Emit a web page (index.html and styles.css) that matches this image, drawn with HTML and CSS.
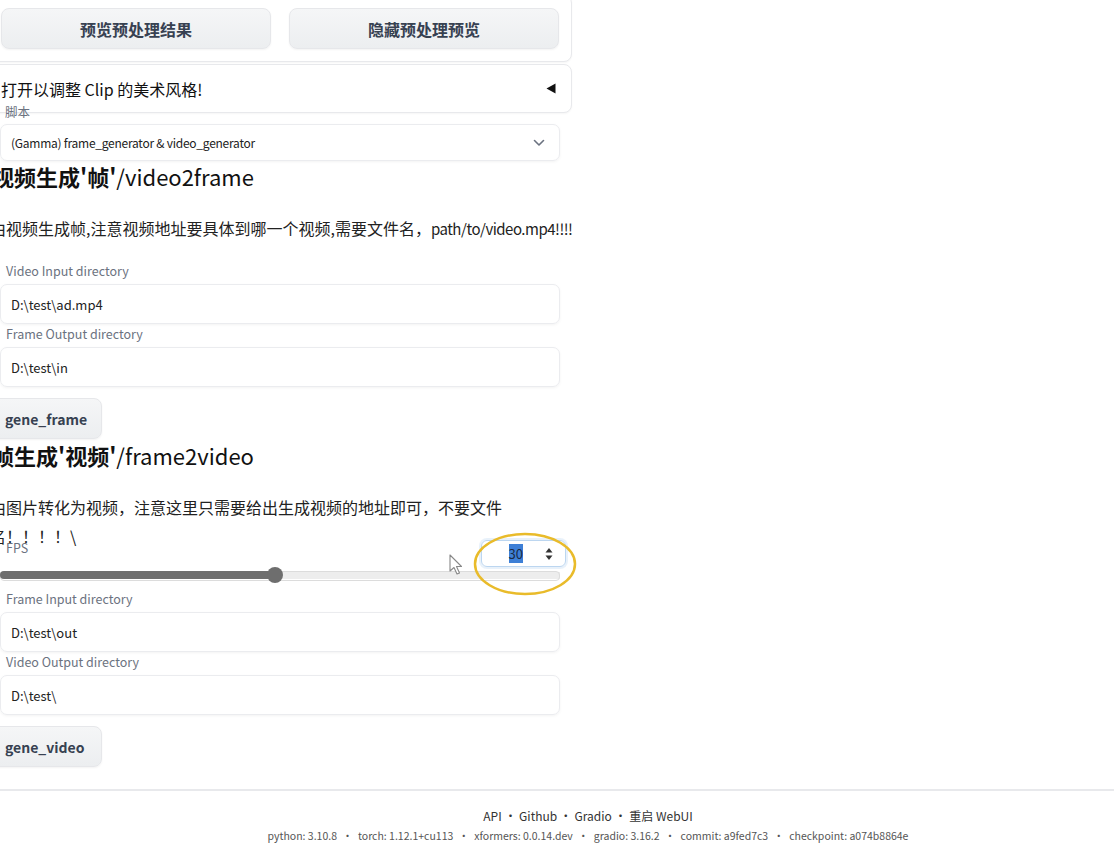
FILE: index.html
```html
<!DOCTYPE html>
<html lang="zh">
<head>
<meta charset="utf-8">
<title>video generator</title>
<link rel="stylesheet" href="styles.css">
</head>
<body>
<div class="page">
  <div class="col">
    <div class="panel btnrow">
      <button class="btn big">预览预处理结果</button>
      <button class="btn big">隐藏预处理预览</button>
    </div>
    <div class="panel accordion">
      <span>打开以调整 Clip 的美术风格!</span>
      <svg class="tri" width="10" height="11" viewBox="0 0 10 11"><polygon points="9.5,0.5 9.5,10.5 0.5,5.5" fill="#111"/></svg>
    </div>
    <div class="field dd">
      <div class="lbl">脚本</div>
      <div class="box select">
        <span class="sel-text">(Gamma) frame_generator &amp; video_generator</span>
        <svg class="chev" width="12" height="8" viewBox="0 0 12 8"><polyline points="1.5,1.5 6,6 10.5,1.5" fill="none" stroke="#6b7280" stroke-width="1.6" stroke-linecap="round" stroke-linejoin="round"/></svg>
      </div>
    </div>
    <h2 class="md-h h1"><b>视频生成'帧'</b>/video2frame</h2>
    <p class="md-p p1">由视频生成帧,注意视频地址要具体到哪一个视频,需要文件名，<span class="latin">path/to/video.mp4!!!!</span></p>
    <div class="field f1">
      <div class="lbl">Video Input directory</div>
      <div class="box">D:\test\ad.mp4</div>
    </div>
    <div class="field f2">
      <div class="lbl">Frame Output directory</div>
      <div class="box">D:\test\in</div>
    </div>
    <button class="btn small b1">gene_frame</button>
    <h2 class="md-h h2"><b>帧生成'视频'</b>/frame2video</h2>
    <p class="md-p p2">由图片转化为视频，注意这里只需要给出生成视频的地址即可，不要文件名！！！！\</p>
    <div class="slider">
      <div class="slider-head">
        <div class="lbl">FPS</div>
        <div class="num"><span class="sel">30</span><span class="spin">
          <svg width="8" height="14" viewBox="0 0 8 14"><polygon points="4,1 7.5,5.5 0.5,5.5" fill="#333"/><polygon points="4,13 7.5,8.5 0.5,8.5" fill="#333"/></svg>
        </span></div>
      </div>
      <div class="track"><div class="fill" style="width:275px"></div><div class="thumb"></div></div>
    </div>
    <div class="field f3">
      <div class="lbl">Frame Input directory</div>
      <div class="box">D:\test\out</div>
    </div>
    <div class="field f2">
      <div class="lbl">Video Output directory</div>
      <div class="box">D:\test\</div>
    </div>
    <button class="btn small b2">gene_video</button>
  </div>
  <div class="rule"></div>
  <footer class="foot">
    <div class="links">API&nbsp;•&nbsp;Github&nbsp;•&nbsp;Gradio&nbsp;•&nbsp;重启 WebUI</div>
    <div class="versions">python: 3.10.8&#x2000;•&#x2000;torch: 1.12.1+cu113&#x2000;•&#x2000;xformers: 0.0.14.dev&#x2000;•&#x2000;gradio: 3.16.2&#x2000;•&#x2000;commit: a9fed7c3&#x2000;•&#x2000;checkpoint: a074b8864e</div>
  </footer>
  <svg class="ring" width="110" height="70" viewBox="0 0 110 70"><ellipse cx="55" cy="35" rx="50" ry="30" fill="none" stroke="#e9bb2a" stroke-width="2.5"/></svg>
  <svg class="cursor" width="16" height="22" viewBox="0 0 16 22"><path d="M1 1 L1 17 L5 13.5 L8 20 L10.5 19 L7.5 12.5 L12.5 12.5 Z" fill="#fff" stroke="#888" stroke-width="1.1" stroke-linejoin="round"/></svg>
</div>
</body>
</html>
```
FILE: styles.css
```css
* { box-sizing: border-box; }
html, body { margin: 0; padding: 0; background: #fff; }
body {
  font-family: "Noto Sans CJK SC", "Noto Sans", sans-serif;
  color: #1f2937;
  overflow: hidden;
}
.page { position: relative; width: 1114px; height: 863px; overflow: hidden; }
.col {
  width: 584px;
  margin-left: -12px;
  margin-top: -5px;
  display: flex;
  flex-direction: column;
}
.panel {
  border: 1px solid #e8e9ec;
  border-radius: 8px;
  background: #fff;
  box-shadow: 0 1px 2px rgba(0,0,0,0.04);
}
.btnrow {
  display: flex;
  gap: 18px;
  padding: 12px;
}
.btn {
  font-family: "Noto Sans CJK SC", "Noto Sans", sans-serif;
  border: 1px solid #e6e7ea;
  border-radius: 8px;
  background: linear-gradient(to bottom, #f5f6f7, #eceef0);
  color: #374151;
  font-weight: 700;
  cursor: pointer;
  box-shadow: 0 1px 2px rgba(0,0,0,0.05);
}
.btn.big { flex: 1; height: 41px; font-size: 16px; }
.accordion {
  margin-top: 2px;
  height: 49px;
  display: flex;
  align-items: center;
  justify-content: space-between;
  padding: 0 15px 0 12px;
  font-size: 16px;
  color: #111;
}
.tri { display: block; }
.field { display: flex; flex-direction: column; padding: 0 12px; }
.lbl {
  font-size: 12.5px;
  line-height: 14px;
  color: #6b7280;
  padding-left: 6px;
}
.box {
  height: 40px;
  border: 1px solid #ebecef;
  border-radius: 7px;
  box-shadow: 0 1px 3px rgba(0,0,0,0.05);
  display: flex;
  align-items: center;
  padding: 0 10px;
  font-size: 13px;
  color: #222;
  margin-top: 6px;
  width: 560px;
}
.dd { margin-top: -8px; }
.dd .lbl { padding-left: 5px; }
.select { height: 37px; margin-top: 5px; justify-content: space-between; padding-right: 14px; }
.sel-text { font-size: 12px; letter-spacing: -0.25px; }
.md-h {
  margin: 0;
  font-size: 22px;
  line-height: 26px;
  font-weight: 400;
  color: #111;
  padding-left: 4px;
}
.md-h b { font-weight: 700; }
.h1 { margin-top: 2px; }
.h2 { margin-top: 3px; }
.md-p {
  margin: 25px 0 0 0;
  font-size: 16px;
  line-height: 29px;
  color: #222;
  padding-left: 2px;
}
.p1 { white-space: nowrap; }
.latin { font-size: 15px; letter-spacing: -0.5px; }
.f1 { margin-top: 21px; }
.f2 { margin-top: 3px; }
.f3 { margin-top: 9px; }
.btn.small {
  align-self: flex-start;
  height: 41px;
  width: 114px;
  font-size: 14px;
  text-align: left;
  padding: 0 0 0 16px;
  border-radius: 0 8px 8px 0;
}
.b1 { margin-top: 11px; }
.b2 { margin-top: 11px; }
.slider { margin-top: -11px; padding: 0 12px; }
.slider-head {
  display: flex;
  justify-content: space-between;
  align-items: flex-start;
  height: 27px;
}
.slider-head .lbl { margin-top: 1px; }
.num {
  width: 85px;
  height: 27px;
  margin-right: -6px;
  border: 1px solid #bcd6f0;
  border-radius: 6px;
  box-shadow: 0 0 0 2px rgba(190,215,240,0.35);
  display: flex;
  align-items: center;
  justify-content: flex-end;
  padding-right: 12px;
  font-size: 13px;
}
.sel { background: #3d7fd6; color: #1a2a44; padding: 1px 0; margin-right: 22px; line-height: 17px; }
.spin { display: flex; align-items: center; }
.track {
  position: relative;
  height: 16px;
  width: 560px;
  display: flex;
  align-items: center;
  background: linear-gradient(#ededed, #ededed) no-repeat left center / 100% 7px;
}
.track::before {
  content: "";
  position: absolute;
  left: 0; right: 0; top: 4px; height: 8px;
  border: 1px solid #dcdcdc;
  border-radius: 4px;
}
.fill {
  height: 8px;
  background: #6e6e6e;
  border-radius: 4px 0 0 4px;
  position: relative;
  z-index: 1;
}
.thumb {
  width: 16px; height: 16px;
  border-radius: 50%;
  background: #6e6e6e;
  margin-left: -8px;
  position: relative;
  z-index: 2;
}
.rule { height: 2px; background: #e8e9ec; margin-top: 22px; }
.foot {
  padding-left: 62px;
  text-align: center;
  margin-top: 16px;
}
.links { font-size: 12px; color: #333; line-height: 18px; }
.versions { font-size: 10.5px; color: #555; line-height: 16px; margin-top: 3px; }
.ring { position: absolute; left: 470px; top: 529px; }
.cursor { position: absolute; left: 449px; top: 554px; }
```
